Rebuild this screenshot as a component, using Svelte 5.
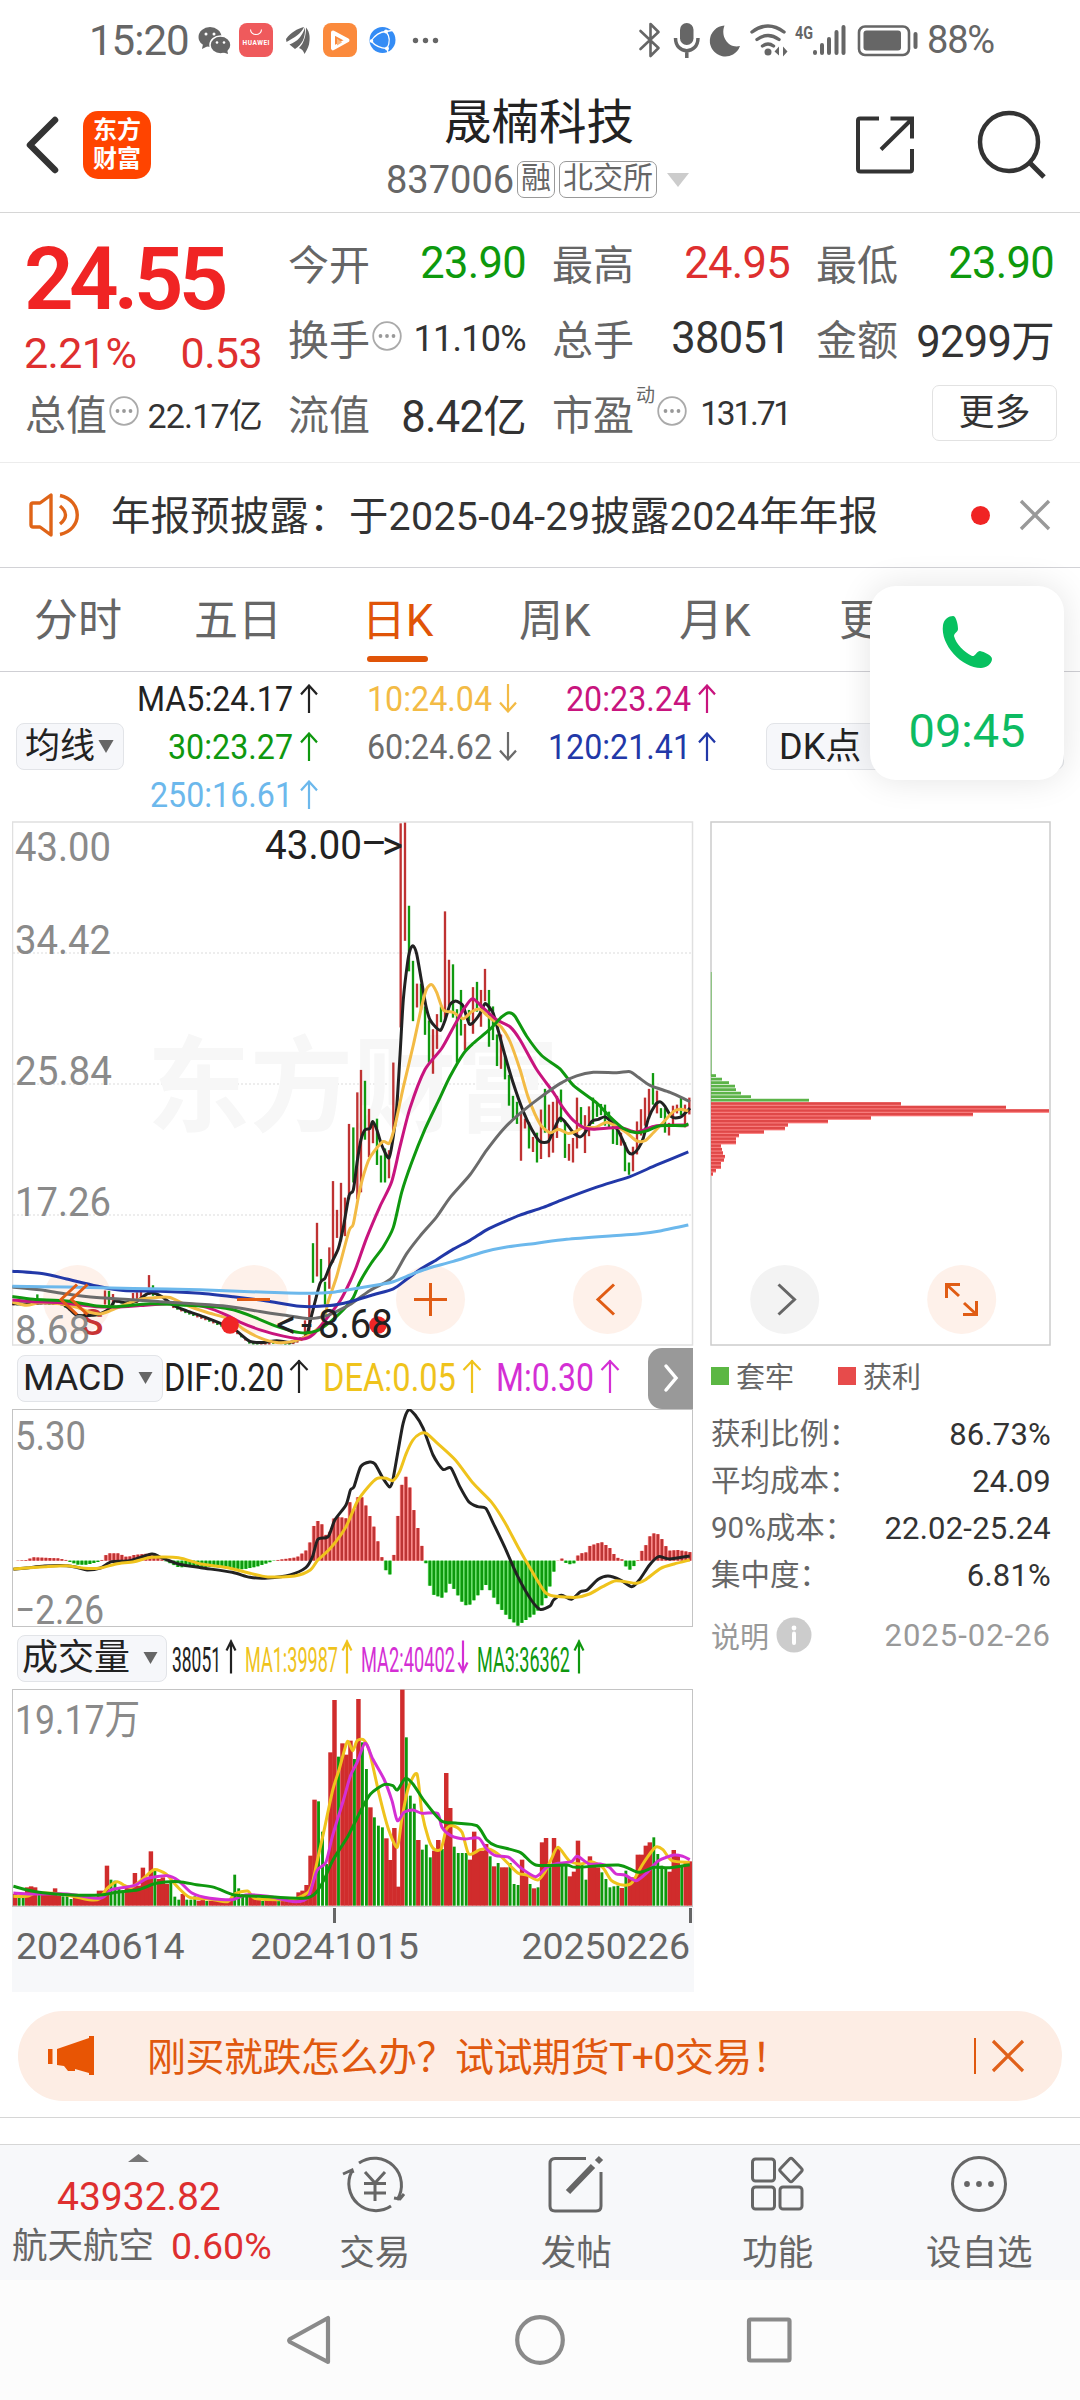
<script>
	const DOWN = '#0d990d';

	const quotes = [
		{ label: '今开', value: '23.90', tone: 'down' },
		{ label: '最高', value: '24.95', tone: 'up' },
		{ label: '最低', value: '23.90', tone: 'down' },
		{ label: '换手', value: '11.10%', tip: true, small: true },
		{ label: '总手', value: '38051' },
		{ label: '金额', value: '9299万' }
	];

	const tabs = ['分时', '五日', '日K', '周K', '月K', '更多'];

	const averages = [
		{ text: 'MA5:24.17', w: 156, color: '#222', up: true },
		{ text: '10:24.04', w: 125, color: '#f3bb45', up: false },
		{ text: '20:23.24', w: 125, color: '#c8147e', up: true },
		{ text: '30:23.27', w: 125, color: '#0f980f', up: true },
		{ text: '60:24.62', w: 125, color: '#6b6b6b', up: false },
		{ text: '120:21.41', w: 143, color: '#2238a8', up: true },
		{ text: '250:16.61', w: 143, color: '#6cb8ec', up: true }
	];

	const macd = [
		{ text: 'DIF:0.20', x: 164, w: 120, color: '#222', ax: 299, up: true },
		{ text: 'DEA:0.05', x: 323, w: 133, color: '#efc31c', ax: 472, up: true },
		{ text: 'M:0.30', x: 496, w: 98, color: '#d42fd4', ax: 610, up: true }
	];

	const volumes = [
		{ text: '38051', x: 172, w: 49, color: '#222', ax: 231, up: true },
		{ text: 'MA1:39987', x: 245, w: 93, color: '#efc31c', ax: 347, up: true },
		{ text: 'MA2:40402', x: 361, w: 94, color: '#d42fd4', ax: 463, up: false },
		{ text: 'MA3:36362', x: 477, w: 93, color: '#0f980f', ax: 579, up: true }
	];

	const chips = [
		{ label: '获利比例：', value: '86.73%' },
		{ label: '平均成本：', value: '24.09' },
		{ label: '90%成本：', value: '22.02-25.24' },
		{ label: '集中度：', value: '6.81%' }
	];

	const parse = (s) => s.trim().split(/\s+/).map((p) => p.split(',').map(Number));

	// Catmull-Rom through the points, flattened a little so peaks do not overshoot
	const curve = (s) => {
		const p = parse(s);
		let d = `M${p[0]}`;
		for (let i = 0; i < p.length - 1; i++) {
			const a = p[i - 1] ?? p[i];
			const b = p[i];
			const c = p[i + 1];
			const e = p[i + 2] ?? c;
			const k = 8;
			d += `C${b[0] + (c[0] - a[0]) / k},${b[1] + (c[1] - a[1]) / k} ${c[0] - (e[0] - b[0]) / k},${c[1] - (e[1] - b[1]) / k} ${c}`;
		}
		return d;
	};

	const at = (p, x) => {
		const i = p.findIndex((q) => q[0] >= x);
		if (i <= 0) return p[0][1];
		const [x0, y0] = p[i - 1];
		const [x1, y1] = p[i];
		return y0 + ((y1 - y0) * (x - x0)) / (x1 - x0);
	};

	// price panel: x units are a third of a pixel
	const ma5 =
		'37,1408 90,1408 130,1405 185,1408 205,1420 230,1440 265,1441 300,1437 330,1420 345,1400 380,1405 410,1400 440,1380 460,1377 485,1387 520,1412 560,1428 620,1448 690,1475 710,1485 750,1515 790,1518 830,1513 870,1518 900,1508 920,1498 935,1440 960,1350 975,1335 990,1300 1015,1250 1030,1190 1047,1100 1060,1083 1072,1000 1083,940 1095,912 1110,908 1118,888 1130,910 1145,955 1167,992 1180,930 1190,850 1200,700 1210,540 1222,440 1230,400 1239,387 1250,410 1265,490 1278,560 1290,598 1308,620 1322,628 1335,600 1350,555 1365,545 1380,550 1390,560 1408,610 1425,600 1440,580 1455,552 1470,565 1480,580 1495,630 1515,700 1540,780 1570,860 1595,910 1620,945 1645,945 1660,915 1680,878 1700,895 1720,920 1740,932 1755,920 1775,888 1795,882 1815,875 1835,890 1855,915 1870,945 1885,975 1898,980 1915,965 1930,935 1945,880 1965,842 1980,832 1995,845 2015,875 2040,876 2055,865 2070,850';
	const priceLines = [
		{
			color: '#222',
			d: ma5
		},
		{
			color: '#f3bb45',
			d: '37,1403 80,1412 120,1405 180,1408 230,1418 270,1432 300,1437 330,1428 370,1412 420,1395 470,1390 510,1390 560,1412 620,1432 690,1452 730,1480 780,1505 830,1518 880,1515 915,1503 945,1485 970,1460 985,1400 1010,1330 1047,1200 1060,1180 1080,1080 1105,1000 1125,970 1150,945 1168,950 1185,900 1210,790 1240,670 1265,560 1280,510 1295,498 1310,520 1330,570 1360,577 1390,595 1415,575 1440,568 1460,585 1480,600 1505,620 1530,660 1560,740 1585,820 1620,895 1650,920 1675,910 1705,922 1730,915 1750,905 1785,905 1820,890 1850,903 1880,920 1910,943 1935,943 1960,920 1990,890 2020,860 2040,853 2065,858'
		},
		{
			color: '#c8147e',
			d: '37,1397 100,1402 180,1405 290,1416 350,1417 420,1413 500,1408 560,1408 620,1418 680,1440 720,1460 780,1482 850,1500 910,1508 940,1495 980,1450 1020,1400 1050,1345 1070,1300 1100,1220 1140,1130 1175,1060 1200,960 1230,850 1275,740 1325,680 1360,620 1390,570 1417,538 1445,560 1490,598 1530,618 1560,655 1610,740 1660,805 1690,850 1720,885 1750,905 1780,910 1860,905 1910,918 1970,900 2065,898'
		},
		{
			color: '#0f980f',
			d: '37,1387 100,1395 200,1400 290,1414 350,1416 450,1408 560,1412 650,1417 700,1425 760,1445 830,1472 900,1490 950,1485 990,1460 1030,1425 1060,1390 1080,1345 1115,1290 1150,1245 1180,1190 1205,1090 1235,1005 1275,910 1315,830 1350,760 1390,695 1420,665 1470,625 1505,590 1527,578 1545,588 1580,645 1625,700 1680,738 1720,785 1790,835 1830,875 1870,908 1910,920 1940,915 1980,900 2050,900 2065,895'
		},
		{
			color: '#6b6b6b',
			d: '37,1360 120,1368 200,1380 290,1390 400,1396 480,1402 580,1408 680,1415 780,1430 850,1440 930,1450 985,1440 1030,1420 1050,1410 1110,1370 1150,1350 1180,1330 1220,1265 1260,1215 1310,1160 1350,1105 1410,1040 1460,970 1510,910 1560,865 1620,820 1680,780 1730,758 1780,748 1850,749 1890,746 1915,762 1950,785 2010,805 2050,822 2070,832'
		},
		{
			color: '#2238a8',
			d: '37,1315 130,1322 200,1337 290,1357 370,1370 480,1372 600,1378 700,1388 800,1400 900,1415 990,1413 1050,1402 1120,1382 1180,1365 1220,1338 1260,1310 1310,1282 1360,1252 1410,1227 1460,1197 1510,1175 1560,1155 1630,1133 1690,1110 1790,1075 1890,1045 1970,1012 2065,975'
		},
		{
			color: '#6cb8ec',
			d: '37,1358 200,1360 400,1364 600,1368 800,1375 930,1378 1000,1375 1050,1367 1140,1353 1180,1345 1240,1322 1290,1305 1360,1287 1450,1260 1520,1246 1610,1235 1700,1224 1850,1213 1920,1208 1980,1200 2065,1183'
		}
	];

	// x, high, low; a trailing 1 marks a rising day
	const candles = parse(
		`112,1381,1405,0 315,1370,1410,1 327,1371,1412,0 339,1380,1410,1 399,1377,1405,1 411,1375,1405,1 423,1370,1400,1
		447,1326,1380,1 459,1355,1385,0 915,1455,1500,1 928,1383,1495,1 939,1235,1348,0 951,1177,1330,1 963,1280,1340,0
		975,1345,1410,0 988,1247,1365,1 999,1058,1290,1 1011,1140,1220,1 1023,1063,1230,1 1035,1105,1215,1 1047,895,1110,1
		1060,905,1062,0 1072,805,1110,1 1083,741,1090,1 1095,772,940,0 1107,852,990,1 1119,890,950,1 1131,880,1012,0
		1143,985,1062,0 1155,965,1062,0 1167,970,1050,1 1180,720,920,1 1202,38,620,1 1215,36,373,1 1227,273,460,0
		1239,430,602,0 1251,495,563,1 1263,495,570,0 1275,560,641,0 1287,600,720,0 1299,625,752,1 1311,582,681,1
		1323,560,605,0 1335,289,600,1 1347,427,560,1 1359,440,592,0 1371,568,720,0 1383,513,643,0 1395,610,685,1
		1407,570,602,0 1419,505,638,1 1431,490,575,0 1443,513,618,1 1455,453,545,1 1467,513,675,0 1479,560,656,0
		1491,640,730,0 1503,640,738,1 1515,700,768,0 1527,755,843,0 1539,815,880,0 1551,832,895,0 1563,865,1000,1
		1575,880,908,1 1587,890,965,0 1599,932,975,1 1611,920,1005,0 1623,854,995,1 1635,795,920,0 1647,840,990,1
		1659,832,977,1 1671,815,935,1 1683,797,890,0 1695,885,992,0 1707,952,1000,1 1719,935,1005,1 1731,820,965,1
		1743,847,910,0 1755,870,978,1 1767,845,930,1 1779,820,895,0 1791,838,875,0 1803,838,870,0 1815,840,900,0
		1827,860,905,0 1839,900,952,0 1851,905,955,0 1863,920,957,1 1875,948,1030,0 1887,1005,1040,0 1899,960,1030,1
		1911,888,982,1 1923,853,928,1 1935,820,900,1 1947,795,880,1 1959,750,840,0 1971,800,865,1 1983,850,878,0
		1995,850,920,0 2007,892,928,1 2019,843,902,1 2031,840,865,1 2043,820,870,0 2055,840,905,1 2068,820,868,1`
	);
	// the quiet stretch before the rally hugs the five-day average
	const quiet = parse(ma5);
	for (let i = 0; i < 73; i++) {
		const x = 40 + i * 12;
		const y = at(quiet, x);
		const h = 3 + ((i * 7) % 7);
		const off = x > 500 ? 5 : 1;
		candles.push([x, y - h + off, Math.min(y + h + off, 1524), [1, 0, 1, 1, 0, 0, 1, 0][(i * 5) % 8]]);
	}

	const macdEnvelope = parse(
		`30,662 58,660 75,652 130,655 148,660 155,665 175,674 195,674 225,664 232,655 240,640 265,640 285,652 300,645 338,640
		350,650 365,660 372,664 400,682 440,680 500,682 545,688 575,680 610,664 622,660 665,652 685,632 695,605 703,558 712,543
		721,553 730,585 739,575 748,535 757,530 775,535 784,485 793,508 802,470 811,472 820,498 829,530 838,562 847,607 856,655
		864,690 873,705 882,648 891,530 900,435 909,410 918,442 927,510 936,564 945,618 954,670 963,738 972,765 990,773
		1000,755 1009,727 1018,750 1036,788 1045,797 1054,793 1068,770 1090,732 1105,770 1120,803 1140,835 1160,857 1180,838
		1200,820 1220,785 1232,738 1241,693 1250,660 1258,655 1266,668 1280,674 1288,668 1293,648 1302,640 1312,638 1321,618
		1347,606 1365,622 1375,642 1385,655 1393,658 1401,678 1411,689 1420,678 1429,660 1438,632 1447,615 1456,588 1465,580
		1475,583 1484,600 1493,622 1500,632 1518,630 1548,637`
	);
	const macdBars = Array.from({ length: 169 }, (_, i) => {
		const x = 40 + i * 8.96;
		return { x, y: at(macdEnvelope, x) };
	});
	const dif = curve(
		'30,688 60,684 100,678 150,677 175,683 195,690 225,684 250,665 290,662 340,642 360,652 400,672 450,683 520,697 560,712 600,714 650,705 685,683 700,650 712,598 735,590 750,540 775,495 785,450 793,440 808,380 828,366 840,372 858,415 873,441 880,420 892,330 903,250 915,210 930,225 948,265 970,345 992,388 1010,384 1030,440 1050,485 1070,500 1088,505 1105,550 1130,620 1160,710 1190,780 1210,808 1232,798 1240,780 1258,766 1280,778 1300,755 1315,750 1340,718 1362,708 1390,720 1415,740 1432,720 1455,675 1475,650 1500,657 1545,648'
	);
	const dea = curve(
		'30,687 100,680 150,677 190,685 225,684 260,672 300,665 340,652 400,653 450,672 510,683 560,700 600,711 660,708 695,690 712,660 740,625 775,560 800,485 825,440 845,415 865,415 880,422 895,395 910,340 925,300 940,282 955,280 980,310 1020,360 1060,430 1100,485 1130,545 1160,620 1190,690 1220,755 1240,768 1290,772 1320,762 1350,740 1380,722 1425,730 1445,720 1480,685 1510,672 1545,660'
	);

	const volumeBars = `r35 g25 g25 r55 r58 r55 g40 r40 r38 r35 r52 r30 g28 g28 g20 r24 r24 r25 r24 r20 r20 r45 r45 r120 g78 g75 g50 g45
		r60 r55 r98 r60 r114 r85 r163 g105 r80 r85 r65 g70 g27 g18 r35 g18 g18 g28 r15 r20 g14 r15 r14 r12 r14 r12 r20 g93 g52
		g35 g35 r35 r28 r18 g14 r18 r25 r20 g18 r14 r18 r15 r20 r40 r45 r62 r150 r318 g313 g222 g125 r460 r617 g447 r487 r453
		r495 g440 r620 g490 g410 r295 g265 g240 g235 r202 r137 r233 r57 r648 g505 g330 g306 r197 g168 g183 g145 r165 r197 g170
		r398 r293 g177 g158 g158 g158 r138 r222 r165 r165 r185 g148 r118 g128 r115 r115 g128 g65 g62 r138 r90 g65 r52 g55 r190
		r203 g118 r203 r175 g125 g120 r88 r102 r195 g125 g78 r148 r125 r115 g100 g80 g55 g58 g60 r53 g105 r85 r85 r153 r153
		r180 r190 g205 g155 g120 g110 r102 r167 r150 g120 r128 r133`
		.split(/\s+/)
		.map((s) => ({ up: s[0] === 'r', h: +s.slice(1) }));
	const volumeStep = (1545 - 34) / (volumeBars.length - 1);
	const volumeLines = [
		{
			color: '#efc31c',
			d: '30,832 60,832 80,822 120,823 150,828 200,842 222,840 240,808 262,788 280,800 295,805 320,780 345,752 372,765 395,800 425,835 470,840 510,848 525,825 555,816 570,838 620,842 660,840 690,820 700,790 710,730 725,640 745,515 760,450 778,368 790,395 800,365 815,363 828,400 850,530 870,630 890,685 900,600 915,505 934,465 945,580 960,660 972,690 988,690 1000,630 1015,620 1035,640 1050,705 1075,692 1095,690 1120,710 1160,762 1180,768 1205,783 1220,760 1235,720 1250,685 1275,725 1300,735 1325,728 1350,745 1370,785 1395,798 1415,792 1440,735 1468,685 1485,692 1505,725 1545,730'
		},
		{
			color: '#d42fd4',
			d: '30,822 70,825 150,825 225,838 250,812 300,800 330,778 375,770 400,785 430,822 470,838 520,842 550,828 600,832 660,848 690,835 710,755 730,730 745,650 770,540 785,470 800,430 818,372 835,420 860,480 878,545 890,605 905,580 925,573 945,583 980,583 990,625 1010,650 1040,660 1072,657 1090,690 1110,710 1140,715 1165,745 1200,773 1225,745 1250,733 1280,728 1293,712 1320,735 1345,735 1365,745 1380,765 1400,768 1425,785 1450,760 1475,725 1510,708 1530,712 1545,722'
		},
		{
			color: '#0f980f',
			d: '30,802 80,818 150,827 225,828 260,820 310,812 350,793 400,788 440,797 480,805 525,828 580,832 680,838 705,825 725,785 745,725 780,650 810,570 830,525 860,497 880,500 890,513 908,478 925,495 950,545 988,605 1020,612 1068,620 1090,662 1110,680 1165,700 1200,738 1270,738 1290,745 1385,738 1430,760 1465,745 1500,746 1545,737'
		}
	];

	const priceLabels = [
		{ text: '43.00', y: 861, w: 96 },
		{ text: '34.42', y: 954, w: 96 },
		{ text: '25.84', y: 1085, w: 97 },
		{ text: '17.26', y: 1216, w: 96 },
		{ text: '8.68', y: 1343.5, w: 75 }
	];

	const trapped = [5, 11, 18, 24, 25, 30, 40, 98];
	const profit = [190, 295, 338, 262, 160, 117, 77, 74, 53, 28, 25, 25, 10, 11, 12, 14, 13, 10, 10, 5, 2];
</script>

{#snippet arrow(up, w = 18, h = 29)}
	<svg class="arrow" width={w} height={h} viewBox="0 0 18 28" preserveAspectRatio="none">
		<path d={up ? 'M9 28V1.5M1 10 9 1.5 17 10' : 'M9 0v26.500M1 18 9 26.500 17 18'} />
	</svg>
{/snippet}

{#snippet tip()}
	<svg class="tip" width="30" height="30" viewBox="0 0 30 30">
		<circle cx="15" cy="15" r="13.800" fill="none" stroke="#aaa" stroke-width="1.800" />
		<circle cx="8.500" cy="15" r="1.900" fill="#999" /><circle cx="15" cy="15" r="1.900" fill="#999" />
		<circle cx="21.500" cy="15" r="1.900" fill="#999" />
	</svg>
{/snippet}

{#snippet readings(items, top, base, aw)}
	<svg class="readings" width="530" height="47" viewBox="164 {top} 530 47">
		{#each items as m}
			<text x={m.x} y={base} fill={m.color} textLength={m.w} lengthAdjust="spacingAndGlyphs">{m.text}</text>
			<path
				d={m.up
					? `M${m.ax} ${base + 2}v-33m${-aw} 10l${aw} -9l${aw} 9`
					: `M${m.ax} ${base - 31}v32m${-aw} -10l${aw} 9l${aw} -9`}
				fill="none"
				stroke={m.color}
				stroke-width="2.200"
			/>
		{/each}
	</svg>
{/snippet}

<div class="phone">
	<header class="status">
		<span class="clock">15:20</span>
		<svg class="notifications" width="242" height="36" viewBox="198 21 242 36">
			<g fill="#666">
				<ellipse cx="210" cy="36" rx="11.500" ry="10" />
				<path d="M203 43l-1 5 6-3z" />
				<ellipse cx="220.500" cy="44" rx="10.500" ry="9" stroke="#fff" stroke-width="1.500" />
				<path d="M222 51l6 2-1-5z" />
			</g>
			<g fill="#fff">
				<circle cx="206" cy="33" r="1.500" /><circle cx="214" cy="33" r="1.500" />
				<circle cx="217" cy="41.500" r="1.300" /><circle cx="224" cy="41.500" r="1.300" />
			</g>
			<rect x="239" y="22" width="34" height="34" rx="8" fill="#ef5a5c" />
			<path d="M250.500 28.500a5.500 5 0 0 0 11 0" fill="none" stroke="#fff" stroke-width="1.100" />
			<text x="242.500" y="43.500" font-size="6.500" font-weight="700" fill="#fff" textLength="27">HUAWEI</text>
			<g fill="#666">
				<path d="M286 38c5-7 11-10 18-12-3 7-9 10-17.500 15z" />
				<path d="M289.500 43.500c8-3 12.500-8 15.500-17 .5 11-3 17-10 21.500z" />
				<path d="M299 47c5-5 7-12 7-20.500 4.500 5 4 12 3 17-1 4-3 7-4.500 9.500-1-3-2.500-5-5.500-6z" />
			</g>
			<rect x="323" y="22" width="34" height="34" rx="8" fill="#fb8a3c" />
			<path d="M333 31.500l14.500 7.800-14.500 8z" fill="none" stroke="#fff" stroke-width="4" stroke-linejoin="round" />
			<path d="M337 37.500v7l5-3z" fill="#f9b67f" />
			<circle cx="382.500" cy="39" r="13" fill="#348cf5" />
			<g fill="none" stroke="#fff" stroke-width="1.300">
				<path d="M371 40Q377 31 386 30.500Q392 38 387 47.500Q377 47 371 40M386 30.500l6-1M387 47.500l1 4" />
			</g>
			<g fill="#fff">
				<circle cx="386" cy="30.500" r="2" /><circle cx="371.500" cy="40" r="1.800" /><circle cx="387" cy="47.500" r="2" />
			</g>
			<g fill="#666">
				<circle cx="415.500" cy="39.500" r="2.700" /><circle cx="425.500" cy="39.500" r="2.700" />
				<circle cx="435.500" cy="39.500" r="2.700" />
			</g>
		</svg>
		<svg class="signals" width="282" height="38" viewBox="638 20 282 38">
			<path
				d="M640.500 30l18 17-8 8V23l8 8-18 17"
				fill="none"
				stroke="#666"
				stroke-width="2.600"
				stroke-linejoin="round"
				stroke-linecap="round"
			/>
			<rect x="680" y="22" width="13.500" height="22" rx="6.700" fill="#666" />
			<path d="M675.500 37c0 17 22.500 17 22.500 0M686.800 49v8" fill="none" stroke="#666" stroke-width="3.500" />
			<path d="M724.500 24.500a15.500 15.500 0 1 0 15.500 20.500c-11 3-20-9-15.500-20.500z" fill="#666" />
			<g fill="none" stroke="#666" stroke-width="3.400" stroke-linecap="round">
				<path d="M752 31q16-12 32 0M757 38.500q11-8 22 0M762.500 45q5.500-4 11 0" />
			</g>
			<circle cx="768" cy="51" r="3.500" fill="#666" />
			<path d="M774.500 50.500l4.500-5v9M787.500 50.500l-4.500 5v-10z" fill="#666" />
			<text x="795" y="38" font-size="18.500" font-weight="700" fill="#666" textLength="18" lengthAdjust="spacingAndGlyphs">4G</text>
			<g stroke="#666" stroke-width="4" stroke-linecap="round">
				<path d="M815 51v1M822 44v8M829 38v14M836.500 31v21M843.500 26v26" />
			</g>
			<rect x="859" y="25.500" width="50" height="28.500" rx="6" fill="none" stroke="#666" stroke-width="2.600" />
			<rect x="863.500" y="29.500" width="37.500" height="20" rx="3" fill="#666" />
			<path d="M915.500 33v13" stroke="#666" stroke-width="4" stroke-linecap="round" />
		</svg>
		<span class="percent">88%</span>
	</header>

	<nav class="titlebar">
		<svg class="back" width="36" height="60" viewBox="0 0 36 60">
			<path d="M30 5 5 30l25 25" fill="none" stroke="#333" stroke-width="6.500" stroke-linecap="round" stroke-linejoin="round" />
		</svg>
		<div class="logo"><span>东方</span><span>财富</span></div>
		<div class="stock">
			<h1>晟楠科技</h1>
			<div class="code">
				<span class="number">837006</span>
				<span class="badge">融</span>
				<span class="badge">北交所</span>
				<svg width="22" height="14" viewBox="0 0 22 14"><path d="M0 0h22L11 14z" fill="#ccc" /></svg>
			</div>
		</div>
		<svg class="share" width="60" height="60" viewBox="0 0 60 60">
			<path
				d="M24 3.500H5Q3 3.500 3 5.500V54q0 2.500 2.500 2.500H55q2 0 2-2V34M35.500 3.500H57v20M56 5 26 34.500"
				fill="none"
				stroke="#333"
				stroke-width="4"
			/>
		</svg>
		<svg class="search" width="70" height="70" viewBox="0 0 70 70">
			<circle cx="32" cy="32" r="29" fill="none" stroke="#333" stroke-width="4.500" />
			<path d="M53 53 67 67" stroke="#333" stroke-width="5" />
		</svg>
	</nav>

	<section class="quote">
		<div class="last">
			<strong>24.55</strong>
			<div class="change"><span>2.21%</span><span>0.53</span></div>
		</div>
		{#each quotes as q}
			<div class="cell">
				<span class="label">{q.label}</span>
				{#if q.tip}{@render tip()}{/if}
				<span class="value {q.tone ?? ''}" class:small={q.small}>{q.value}</span>
			</div>
		{/each}
		<div class="cell">
			<span class="label">总值</span>{@render tip()}<span class="value tiny">22.17亿</span>
		</div>
		<div class="cell"><span class="label">流值</span><span class="value">8.42亿</span></div>
		<div class="cell">
			<span class="label">市盈</span><sup>动</sup>{@render tip()}<span class="value tiny ratio">131.71</span>
		</div>
		<div class="cell"><button class="more">更多</button></div>
	</section>

	<section class="notice">
		<svg width="52" height="46" viewBox="0 0 52 46" fill="none" stroke="#df6418" stroke-width="3.400" stroke-linejoin="round">
			<path d="M2 13q0-2 2-2h7L22 3v40l-11-8H4q-2 0-2-2zM31 14q11 9 0 18M31 3.500c23 5 23 34 0 39" />
		</svg>
		<p>年报预披露：于2025-04-29披露2024年年报</p>
		<i class="dot"></i>
		<svg width="32" height="32" viewBox="0 0 32 32"><path d="M2 2l28 28M30 2 2 30" stroke="#999" stroke-width="3.400" /></svg>
	</section>

	<nav class="tabs">
		{#each tabs as tab, i}
			<span class:active={i === 2}>{tab}</span>
		{/each}
	</nav>

	<section class="averages">
		<button class="pick">均线<svg width="16" height="13" viewBox="0 0 14 12"><path d="M0 0h14L7 12z" fill="#666" /></svg></button>
		<div class="values">
			{#each averages as m}
				<div style:color={m.color}>
					<svg class="figure" width={m.w} height="34"><text x="0" y="29" font-size="35" textLength={m.w} lengthAdjust="spacingAndGlyphs">{m.text}</text></svg>
					{@render arrow(m.up)}
				</div>
			{/each}
		</div>
		<button class="pick dk">DK点</button>
		<aside class="call">
			<svg width="54" height="54" viewBox="0 0 54 54">
				<path
					d="M3 10C4 4 9 1 13 1c3 0 5 8 5 13 0 3-4 4-4 7 2 8 10 16 18 20 3 1 5-5 8-5 4 1 12 4 12 8 0 5-6 9-11 9C22 53 0 30 3 10z"
					fill="#07c160"
				/>
			</svg>
			<span>09:45</span>
		</aside>
	</section>

	<main class="charts">
		<div class="left">
			<svg class="panel" width="682" height="526" viewBox="12 821 682 526">
				<rect x="12.500" y="822" width="680" height="523" fill="#fff" stroke="#e0e0e0" stroke-width="1.500" />
				<g stroke="#dcdcdc" stroke-width="1.200" stroke-dasharray="2 2">
					<path d="M13 953H692M13 1084H692M13 1215H692" />
				</g>
				<text class="watermark" x="147" y="1124" textLength="412" lengthAdjust="spacingAndGlyphs">东方财富</text>
				<g fill="#fef1ea">
					<circle cx="77.500" cy="1299.500" r="34.500" /><circle cx="254" cy="1299.500" r="34.500" />
					<circle cx="430.500" cy="1299.500" r="34.500" /><circle cx="607.500" cy="1299.500" r="34.500" />
				</g>
				<text x="81" y="1335" font-size="37" font-weight="500" fill="#c83434">S</text>
				<g transform="translate(0 810) scale(.33333 .35075)">
					{#each candles as [x, hi, lo, up]}
						<rect x={x - 3.5} y={hi} width="7" height={lo - hi} fill={up ? '#bf3232' : '#109a10'} />
					{/each}
					{#each priceLines as line}
						<path class="line" d={curve(line.d)} stroke={line.color} />
					{/each}
				</g>
				<g class="axis">
					{#each priceLabels as l}
						<text x="15" y={l.y} textLength={l.w} lengthAdjust="spacingAndGlyphs">{l.text}</text>
					{/each}
				</g>
				<circle cx="230" cy="1325" r="8.800" fill="#f02626" /><circle cx="378" cy="1325" r="8.800" fill="#f02626" />
				<g class="mark">
					<text x="265" y="858.500" textLength="97" lengthAdjust="spacingAndGlyphs">43.00</text>
					<text y="858.500"><tspan x="361" dy="-2">–</tspan><tspan x="382" dy="2">&gt;</tspan></text>
					<text y="1338"><tspan x="276">&lt;</tspan><tspan x="301">-</tspan></text>
					<text x="318" y="1338" textLength="75" lengthAdjust="spacingAndGlyphs">8.68</text>
				</g>
				<g fill="none" stroke="#e05c14" stroke-width="3">
					<path d="M77 1284.500 61 1299.500l16 15M87.500 1284.500l-16 15 16 15M237 1299.500h33M414 1299.500h33M430.500 1283v33M614 1284.500l-16 15 16 15" />
				</g>
			</svg>

			<div class="indicator">
				<button class="pick macd">MACD<svg width="15" height="12" viewBox="0 0 14 12"><path d="M0 0h14L7 12z" fill="#666" /></svg></button>
				{@render readings(macd, 1354, 1390, 8.5)}
				<span class="expand">
					<svg width="16" height="30" viewBox="0 0 16 30"><path d="M3 3l10 12L3 27" fill="none" stroke="#fff" stroke-width="3.500" stroke-linecap="round" /></svg>
				</span>
			</div>

			<svg class="panel" width="682" height="218" viewBox="12 1409 682 218">
				<rect x="12.500" y="1409.500" width="680" height="217" fill="#fff" stroke="#c4c4c4" />
				<g transform="translate(0 1340) scale(.44643 .33333)">
					{#each macdBars as b}
						<rect x={b.x - 4.5} y={Math.min(b.y, 662)} width="9" height={Math.abs(b.y - 662)} fill={b.y < 662 ? '#fa8585' : '#66dc66'} />
						<rect x={b.x - 2.7} y={Math.min(b.y, 662)} width="5.4" height={Math.abs(b.y - 662)} fill={b.y < 662 ? '#bc3535' : DOWN} />
					{/each}
					<path class="line" d={dif} stroke="#222" />
					<path class="line" d={dea} stroke="#efc31c" />
				</g>
				<g class="axis">
					<text x="15" y="1450" textLength="71" lengthAdjust="spacingAndGlyphs">5.30</text>
					<text x="15" y="1624" textLength="89" lengthAdjust="spacingAndGlyphs">−2.26</text>
				</g>
			</svg>

			<div class="indicator">
				<button class="pick volume">成交量<svg width="15" height="12" viewBox="0 0 14 12"><path d="M0 0h14L7 12z" fill="#666" /></svg></button>
				{@render readings(volumes, 1635, 1671.5, 4.5)}
			</div>

			<svg class="panel" width="682" height="218" viewBox="12 1690 682 218">
				<rect x="12.500" y="1690.500" width="680" height="217" fill="#fff" stroke="#c4c4c4" />
				<g transform="translate(0 1620) scale(.44643 .33333)">
					{#each volumeBars as b, i}
						<rect
							x={34 + i * volumeStep - (b.up ? 5 : 3.2)}
							y={860 - b.h}
							width={b.up ? 10 : 6.4}
							height={b.h}
							fill={b.up ? '#d02c2c' : DOWN}
						/>
					{/each}
					{#each volumeLines as line}
						<path class="line" d={curve(line.d)} stroke={line.color} />
					{/each}
				</g>
				<g class="axis"><text x="15" y="1735" textLength="125" lengthAdjust="spacingAndGlyphs">19.17万</text></g>
			</svg>
			<div class="dates">
				<i style:margin-left="321px"></i><i style:margin-left="353px"></i>
				<div><span>20240614</span><span>20241015</span><span>20250226</span></div>
			</div>
		</div>

		<div class="right">
			<svg class="panel" width="341" height="526" viewBox="710 821 341 526">
				<rect x="711" y="822" width="339" height="523" fill="#fff" stroke="#ccc" stroke-width="1.500" />
				<path d="M711.300 972v104" stroke="#7dc070" />
				{#each trapped as w, i}
					<rect x="711" y={1074.2 + i * 3.51} width={w} height="2.8" fill="#5cb349" />
				{/each}
				{#each profit as w, i}
					<rect x="711" y={1102.3 + i * 3.51} width={w} height="3.5" fill="#fa7676" />
					<rect x="711" y={1102.3 + i * 3.51} width={w} height="2.4" fill="#df4848" />
				{/each}
				<circle cx="784.700" cy="1299.500" r="34.500" fill="#f3f3f3" />
				<circle cx="961.700" cy="1299.500" r="34.500" fill="#fef1ea" />
				<path d="M778.500 1284.500l16 15-16 15" fill="none" stroke="#666" stroke-width="3" />
				<path
					d="M960 1284.500h-13.500V1298M947 1285l12 11M976.500 1301v13.500H963M976 1314l-12-11"
					fill="none"
					stroke="#e05c14"
					stroke-width="3"
				/>
			</svg>
			<div class="legend"><i></i><span>套牢</span><i class="gain"></i><span>获利</span></div>
			<dl>
				{#each chips as c}
					<div><dt>{c.label}</dt><dd>{c.value}</dd></div>
				{/each}
			</dl>
			<div class="explain">
				<span>说明</span>
				<svg width="36" height="36" viewBox="0 0 36 36">
					<circle cx="18" cy="18" r="17.500" fill="#ccc" /><circle cx="18" cy="11" r="2.400" fill="#fff" />
					<path d="M18 16.500v9.500" stroke="#fff" stroke-width="4" stroke-linecap="round" />
				</svg>
				<time>2025-02-26</time>
			</div>
		</div>
	</main>

	<section class="banner">
		<svg width="48" height="40" viewBox="0 0 48 40" fill="#e85504">
			<path d="M0 13h4.500v15H0zM9 13 41 2V0h5v39h-5v-2l-14-4v2h-7l-4-5-7-1z" />
		</svg>
		<p>刚买就跌怎么办？试试期货T+0交易！</p>
		<i></i>
		<svg width="34" height="34" viewBox="0 0 34 34"><path d="M2 2l30 30M32 2 2 32" stroke="#e0601a" stroke-width="3.200" /></svg>
	</section>

	<div class="divider"></div>

	<footer class="toolbar">
		<div class="index">
			<svg width="21" height="8" viewBox="0 0 21 8"><path d="M0 8 10.500 0 21 8z" fill="#777" /></svg>
			<strong>43932.82</strong>
			<div><span>航天航空</span><em>0.60%</em></div>
		</div>
		<div class="tool">
			<svg width="66" height="60" viewBox="0 0 66 60" fill="none" stroke="#666" stroke-width="3">
				<path d="M17 9A27 27 0 0 1 55 46M62 40l-4 5-6-1M49 52A27 27 0 0 1 10 17M1 20l9-4 1 3" />
				<path d="M23 18l10 11 10-11M33 29v18M22 29.500h22M22 39h22" />
			</svg>
			<span>交易</span>
		</div>
		<div class="tool">
			<svg width="56" height="60" viewBox="0 0 56 60" fill="none" stroke="#666">
				<path d="M38 4.500H7Q2 4.500 2 9.500V52q0 5 5 5H48q5 0 5-5V18" stroke-width="3" />
				<path d="M45 12 20 38M49 8l4-4" stroke-width="6" />
			</svg>
			<span>发帖</span>
		</div>
		<div class="tool">
			<svg width="56" height="60" viewBox="0 0 56 60" fill="none" stroke="#666" stroke-width="3">
				<rect x="2.500" y="5" width="22" height="22" rx="3" /><rect x="2.500" y="33" width="22" height="22" rx="3" />
				<rect x="30" y="33" width="22" height="22" rx="3" />
				<path d="M39.500 5q1.500-1.500 3 0l9 9.500q1.500 1.500 0 3l-9 9.500q-1.500 1.500-3 0l-9-9.500q-1.500-1.500 0-3z" />
			</svg>
			<span>功能</span>
		</div>
		<div class="tool">
			<svg width="58" height="60" viewBox="0 0 58 60" fill="#666">
				<circle cx="29" cy="30" r="26.500" fill="none" stroke="#666" stroke-width="3" />
				<circle cx="17" cy="30" r="2.900" /><circle cx="29" cy="30" r="2.900" /><circle cx="41" cy="30" r="2.900" />
			</svg>
			<span>设自选</span>
		</div>
	</footer>

	<div class="sysnav">
		<svg width="506" height="52" viewBox="287 2314 506 52" fill="none" stroke="#8a8a8a" stroke-width="4.200" stroke-linejoin="round">
			<path d="M328 2318v44l-38-20q-1.500-1.500 0-3z" />
			<circle cx="540" cy="2340" r="22.800" />
			<rect x="749" y="2319.500" width="40.500" height="41" rx="1.500" />
		</svg>
	</div>
</div>

<style>
	:global(body) {
		margin: 0;
		background: #fff;
	}
	* {
		box-sizing: border-box;
	}
	.phone {
		width: 1080px;
		height: 2400px;
		overflow: hidden;
		display: flex;
		flex-direction: column;
		background: #fff;
		color: #333;
		font-family: Roboto, 'Noto Sans CJK SC', sans-serif;
	}
	svg {
		display: block;
		flex: none;
	}
	p,
	h1,
	dl,
	dd {
		margin: 0;
	}
	button {
		font: inherit;
		color: inherit;
		padding: 0;
		flex: none;
	}

	.status {
		height: 78px;
		flex: none;
		display: flex;
		align-items: center;
		padding: 2px 0 0 89px;
		color: #666;
		white-space: nowrap;
	}
	.clock {
		width: 109px;
		font-size: 42px;
		letter-spacing: -1px;
	}
	.signals {
		margin-left: 198px;
	}
	.percent {
		margin-left: 7px;
		font-size: 38px;
		letter-spacing: -1.2px;
	}

	.titlebar {
		height: 135px;
		flex: none;
		display: flex;
		align-items: center;
		border-bottom: 1.5px solid #d6d6d6;
	}
	.back {
		margin-left: 25px;
	}
	.logo {
		width: 68px;
		height: 68px;
		margin-left: 22px;
		border-radius: 15px;
		background: #ff4400;
		color: #fff;
		font-size: 24px;
		font-weight: 700;
		line-height: 29px;
		display: flex;
		flex-direction: column;
		align-items: center;
		justify-content: center;
	}
	.stock {
		width: 304px;
		margin-left: 235px;
		padding-top: 3px;
		color: #222;
	}
	h1 {
		margin-left: 58px;
		font-size: 47.5px;
		font-weight: 400;
		line-height: 58px;
		white-space: nowrap;
	}
	.code {
		display: flex;
		align-items: center;
		height: 40px;
		margin-top: 8px;
		color: #666;
	}
	.number {
		width: 131px;
		font-size: 38px;
	}
	.badge {
		height: 37px;
		padding: 0 3px;
		margin-right: 4px;
		border: 1.5px solid #999;
		border-radius: 7px;
		font-size: 30px;
		line-height: 32px;
	}
	.code svg {
		margin-left: 6px;
	}
	.share {
		margin-left: 165px;
	}
	.search {
		margin-left: 62px;
	}

	.quote {
		height: 250px;
		flex: none;
		display: grid;
		grid-template-columns: 237px repeat(3, 238px);
		grid-auto-rows: 75px;
		column-gap: 26px;
		padding: 13px 0 0 25px;
		border-bottom: 1.5px solid #ececec;
		white-space: nowrap;
	}
	.last {
		grid-row: span 2;
		color: #f02424;
	}
	.last strong {
		display: block;
		height: 104px;
		margin-left: -1px;
		font-size: 87px;
		font-weight: 600;
		line-height: 106px;
		letter-spacing: -4.8px;
	}
	.change {
		display: flex;
		justify-content: space-between;
		margin-left: -1px;
		font-size: 43px;
		line-height: 46px;
		letter-spacing: -0.6px;
		color: #de2f2f;
	}
	.cell {
		display: flex;
		align-items: center;
	}
	.label {
		margin-top: -4px;
		font-size: 41px;
		color: #666;
	}
	.tip {
		margin: -6px 0 0 2px;
	}
	.value {
		margin-left: auto;
		font-size: 43.5px;
		letter-spacing: -0.7px;
	}
	.value.small {
		font-size: 36px;
	}
	.value.tiny {
		font-size: 34px;
		letter-spacing: -0.8px;
	}
	.value.ratio {
		font-size: 33.5px;
		letter-spacing: -2.2px;
	}
	.up {
		color: #de2f2f;
	}
	.down {
		color: #0d990d;
	}
	sup {
		align-self: flex-start;
		margin: 9px 0 0 2px;
		font-size: 19px;
		line-height: 22px;
		color: #666;
	}
	.more {
		width: 125px;
		height: 56px;
		margin: -2px -3px 0 auto;
		background: #fff;
		border: 1.5px solid #e2e2e2;
		border-radius: 7px;
		font-size: 36px;
		line-height: 50px;
	}

	.notice {
		height: 105px;
		flex: none;
		display: flex;
		align-items: center;
		padding-left: 29px;
		border-bottom: 1.5px solid #d2d2d6;
	}
	.notice p {
		width: 860px;
		margin: -5px 0 0 30px;
		font-size: 39.3px;
		letter-spacing: 0.35px;
		white-space: nowrap;
	}
	.dot {
		width: 19px;
		height: 19px;
		margin-right: 29px;
		border-radius: 50%;
		background: #f02424;
	}

	.tabs {
		height: 104px;
		flex: none;
		display: flex;
		align-items: center;
		padding-left: 34px;
		border-bottom: 1.5px solid #cfcfd4;
		font-size: 44px;
		color: #666;
		white-space: nowrap;
	}
	.tabs span {
		width: 160px;
		height: 91px;
		line-height: 95px;
	}
	.tabs span:nth-child(2) {
		width: 168px;
	}
	.tabs .active {
		width: 71px;
		margin-right: 86px;
		color: #e05408;
		display: flex;
		flex-direction: column;
		align-items: center;
	}
	.active::after {
		content: '';
		flex: none;
		width: 61px;
		height: 6px;
		margin-top: -13px;
		border-radius: 3px;
		background: #e05408;
	}

	.averages {
		position: relative;
		height: 149px;
		flex: none;
		display: flex;
		align-items: center;
		padding-left: 16px;
	}
	.pick {
		height: 47px;
		flex: none;
		display: flex;
		align-items: center;
		padding-left: 8px;
		background: #f6f7fa;
		border: 1.5px solid #e2e4e8;
		border-radius: 8px;
		font-size: 35px;
		line-height: 42px;
		color: #222;
		white-space: nowrap;
	}
	.averages .pick {
		width: 108px;
	}
	.averages .pick svg {
		margin-left: 3px;
	}
	.values {
		display: grid;
		grid-template-columns: 182px 173px 173px;
		grid-auto-rows: 48px;
		column-gap: 26px;
		margin-left: 12px;
	}
	.values > div {
		display: flex;
		align-items: center;
		justify-content: flex-end;
		gap: 7px;
	}
	.figure {
		overflow: visible;
	}
	.values text {
		fill: currentColor;
	}
	.arrow {
		fill: none;
		stroke: currentColor;
		stroke-width: 2.2;
	}
	.averages .dk {
		width: 298px;
		margin-left: 50px;
		padding-left: 12px;
		font-size: 36px;
	}
	.call {
		position: absolute;
		left: 870px;
		top: -86px;
		width: 194px;
		height: 194px;
		display: flex;
		flex-direction: column;
		align-items: center;
		padding-top: 29px;
		border-radius: 26px;
		background: #fff;
		box-shadow: 0 0 34px rgba(0, 0, 0, 0.11);
		color: #0dbb62;
		font-size: 47px;
	}
	.call span {
		margin-top: 34px;
		line-height: 56px;
	}

	.charts {
		height: 1172px;
		flex: none;
		display: flex;
		align-items: flex-start;
		padding-left: 12px;
	}
	.left {
		width: 682px;
	}
	.line {
		fill: none;
		stroke-width: 3px;
		vector-effect: non-scaling-stroke;
	}
	.watermark {
		fill: #f7f7f7;
		font-size: 104px;
		font-weight: 700;
	}
	.axis {
		font-size: 40.5px;
		fill: #8a8a8a;
	}
	.mark {
		font-size: 40px;
		fill: #222;
	}
	.indicator {
		height: 62px;
		display: flex;
		align-items: center;
		padding-left: 5px;
	}
	.indicator .pick {
		width: 146px;
		justify-content: space-between;
		padding-right: 9px;
	}
	.indicator .volume {
		width: 150px;
		padding: 0 8px 0 4px;
		font-size: 36px;
	}
	.indicator .macd {
		padding-left: 5px;
		font-size: 36px;
	}
	.readings {
		margin-left: 1px;
		margin-right: -46px;
		font-size: 38px;
	}
	.volume + .readings {
		margin-left: -3px;
		font-size: 35px;
	}
	.expand {
		width: 45px;
		height: 61px;
		flex: none;
		display: grid;
		place-items: center;
		border-radius: 14px 0 0 14px;
		background: #999;
	}
	.dates {
		height: 85px;
		display: flex;
		flex-wrap: wrap;
		align-content: flex-start;
		padding-top: 1px;
		background: #f7f8fa;
	}
	.dates i {
		width: 3px;
		height: 15px;
		background: #666;
	}
	.dates div {
		width: 682px;
		display: flex;
		justify-content: space-between;
		padding: 1px 4px 0 4px;
		font-size: 37.5px;
		line-height: 44px;
		color: #666;
	}
	.dates span:nth-child(2) {
		margin-right: 37px;
	}

	.right {
		width: 341px;
		margin-left: 16px;
	}
	.legend {
		display: flex;
		align-items: center;
		height: 56px;
		font-size: 29px;
		color: #666;
	}
	.legend i {
		width: 18px;
		height: 18px;
		margin: 1px 7px 0 1px;
		background: #5bb743;
	}
	.legend .gain {
		margin-left: 44px;
		background: #e74b4b;
	}
	dl {
		padding: 8px 0 0 1px;
		font-size: 29.5px;
	}
	dl div {
		display: flex;
		justify-content: space-between;
		height: 47px;
		line-height: 47px;
		white-space: nowrap;
	}
	dt {
		color: #666;
	}
	dd {
		color: #333;
		font-size: 31px;
		letter-spacing: 0.2px;
	}
	.explain {
		display: flex;
		align-items: center;
		height: 72px;
		padding-left: 1px;
		font-size: 29px;
		color: #999;
	}
	.explain svg {
		margin-left: 7px;
	}
	time {
		margin-left: auto;
		font-size: 31px;
		letter-spacing: 1px;
	}

	.banner {
		height: 90px;
		flex: none;
		display: flex;
		align-items: center;
		margin: 18px 18px 16px;
		padding-left: 30px;
		border-radius: 45px;
		background: #fdede4;
		color: #e0580e;
	}
	.banner p {
		width: 827px;
		margin: -5px 0 0 51px;
		font-size: 39px;
		letter-spacing: -0.5px;
		white-space: nowrap;
	}
	.banner i {
		width: 1.5px;
		height: 36px;
		margin-right: 15px;
		background: #e0580e;
	}
	.divider {
		height: 27px;
		flex: none;
		border-top: 1.5px solid #d6d6d6;
	}

	.toolbar {
		height: 136px;
		flex: none;
		display: flex;
		border-top: 1.5px solid #d6d6d6;
		background: #f7f8fa;
		font-size: 35.5px;
		color: #666;
	}
	.index {
		width: 274px;
		padding: 9px 0 0 12px;
		white-space: nowrap;
	}
	.index svg {
		margin-left: 116px;
	}
	.index strong {
		display: block;
		margin: 11px 0 0 45px;
		font-size: 39px;
		font-weight: 400;
		line-height: 48px;
		color: #de2f2f;
	}
	.index div {
		display: flex;
		gap: 17px;
		line-height: 51px;
	}
	.index em {
		font-style: normal;
		font-size: 37.5px;
		color: #de2f2f;
	}
	.tool {
		width: 201.5px;
		display: flex;
		flex-direction: column;
		align-items: center;
		padding-top: 9px;
	}
	.tool span {
		margin-top: 15px;
		line-height: 48px;
	}
	.sysnav {
		flex: 1;
		display: flex;
		justify-content: center;
		padding-top: 34px;
		background: #fcfcfc;
	}
</style>
